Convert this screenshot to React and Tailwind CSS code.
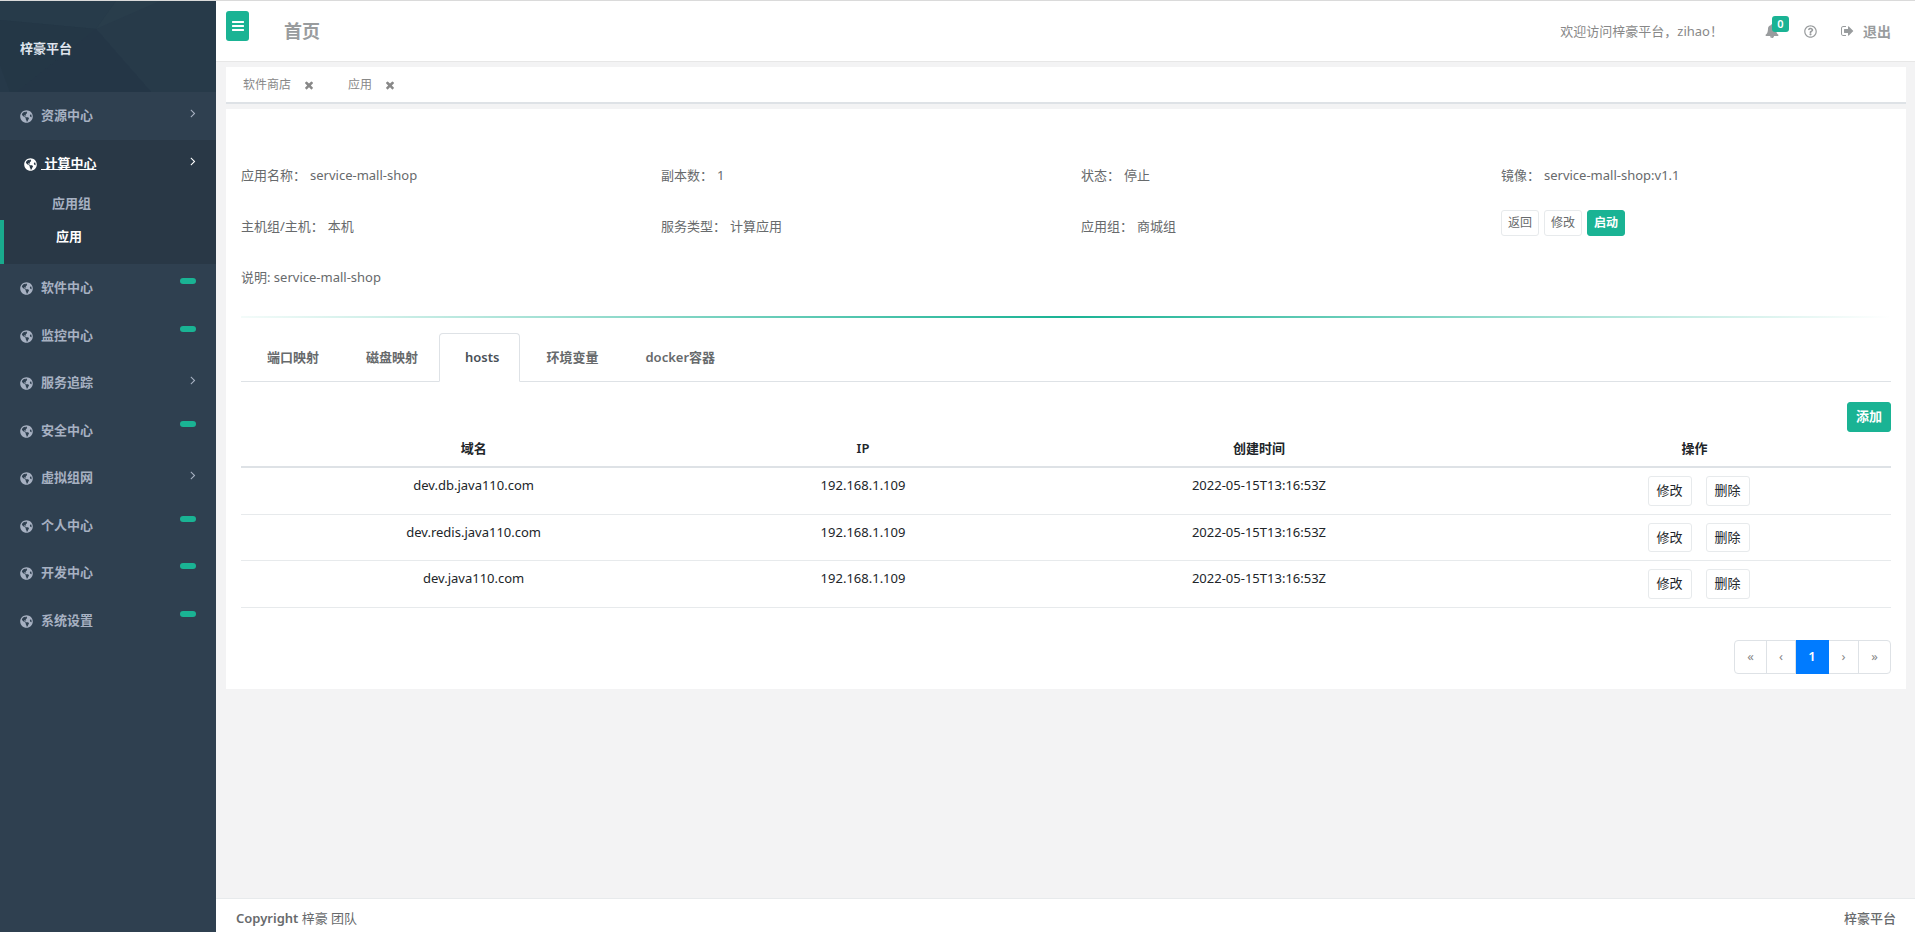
import React from "react";
import { FaGlobeAmericas, FaRegQuestionCircle } from "react-icons/fa";

const PATHS = {
  bars: "M1664 1344v128q0 26-19 45t-45 19h-1408q-26 0-45-19t-19-45v-128q0-26 19-45t45-19h1408q26 0 45 19t19 45zm0-512v128q0 26-19 45t-45 19h-1408q-26 0-45-19t-19-45v-128q0-26 19-45t45-19h1408q26 0 45 19t19 45zm0-512v128q0 26-19 45t-45 19h-1408q-26 0-45-19t-19-45v-128q0-26 19-45t45-19h1408q26 0 45 19t19 45z",
  times:
    "M1490 1322q0 40-28 68l-136 136q-28 28-68 28t-68-28l-294-294-294 294q-28 28-68 28t-68-28l-136-136q-28-28-28-68t28-68l294-294-294-294q-28-28-28-68t28-68l136-136q28-28 68-28t68 28l294 294 294-294q28-28 68-28t68 28l136 136q28 28 28 68t-28 68l-294 294 294 294q28 28 28 68z",
  angle:
    "M1171 960q0 13-10 23l-466 466q-10 10-23 10t-23-10l-50-50q-10-10-10-23t10-23l393-393-393-393q-10-10-10-23t10-23l50-50q10-10 23-10t23 10l466 466q10 10 10 23z",
  bell: "M912 1696q0-16-16-16-59 0-101.5-42.5t-42.5-101.5q0-16-16-16t-16 16q0 73 51.5 124.5t124.5 51.5q16 0 16-16zm816-288q0 52-38 90t-90 38h-448q0 106-75 181t-181 75-181-75-75-181h-448q-52 0-90-38t-38-90q50-42 91-88t85-119.5 74.5-158.5 50-206 19.5-260q0-152 117-282.5t307-158.5q-8-19-8-39 0-40 28-68t68-28 68 28 28 68q0 20-8 39 190 28 307 158.5t117 282.5q0 139 19.5 260t50 206 74.5 158.5 85 119.5 91 88z",
  signOut:
    "M640 1440q0 4 1 20t.5 26.5-3 23.5-10 19.5-20.5 6.5h-320q-119 0-203.5-84.5t-84.5-203.5v-704q0-119 84.5-203.5t203.5-84.5h320q13 0 22.5 9.5t9.5 22.5q0 4 1 20t.5 26.5-3 23.5-10 19.5-20.5 6.5h-320q-66 0-113 47t-47 113v704q0 66 47 113t113 47h312l11.5 1 11.5 3 8 5.5 7 9 2 13.5zm928-544q0 26-19 45l-544 544q-19 19-45 19t-45-19-19-45v-288h-448q-26 0-45-19t-19-45v-384q0-26 19-45t45-19h448v-288q0-26 19-45t45-19 45 19l544 544q19 19 19 45z",
};

function Icon({ name, className }) {
  return (
    <svg viewBox="0 0 1792 1792" fill="currentColor" aria-hidden="true" className={className}>
      <path d={PATHS[name]} />
    </svg>
  );
}

const MENU = [
  { label: "资源中心", arrow: true },
  { label: "计算中心", arrow: true, open: true },
  { label: "软件中心" },
  { label: "监控中心" },
  { label: "服务追踪", arrow: true },
  { label: "安全中心" },
  { label: "虚拟组网", arrow: true },
  { label: "个人中心" },
  { label: "开发中心" },
  { label: "系统设置" },
];

function MenuItem({ item }) {
  return (
    <li className={item.open ? "bg-[#293846]" : ""}>
      <a
        href="#"
        className={
          item.open
            ? "flex items-start py-[14px] pl-6 pr-5 font-semibold text-white"
            : "flex items-start py-[14px] pl-5 pr-5 font-semibold text-[#a7b1c2]"
        }
      >
        <FaGlobeAmericas className="mt-1 size-[13px] shrink-0" aria-hidden="true" />
        <span
          className={
            item.open ? "grow whitespace-pre pl-1 [&>span]:underline" : "grow pl-2"
          }
        >
          <span>{item.open ? " " + item.label : item.label}</span>
        </span>
        {item.arrow ? (
          <Icon name="angle" className="-mr-1 size-[14px]" />
        ) : (
          <span className="h-[6px] w-4 rounded-[3px] bg-[#1ab394]" />
        )}
      </a>
      {item.open && (
        <ul className="font-semibold">
          <li>
            <a href="#" className="flex h-[33px] items-center pl-[52px] text-[#a7b1c2]">
              应用组
            </a>
          </li>
          <li>
            <a
              href="#"
              className="flex h-11 items-start border-l-4 border-[#19aa8d] pl-[52px] pt-[7px] text-white"
            >
              应用
            </a>
          </li>
        </ul>
      )}
    </li>
  );
}

function Sidebar() {
  return (
    <aside className="w-[216px] shrink-0 bg-[#2f4050]">
      <div className="relative flex h-[91px] items-center overflow-hidden bg-[#263949] px-5 pt-1">
        <svg
          viewBox="0 0 216 91"
          preserveAspectRatio="none"
          className="absolute inset-0 size-full"
          aria-hidden="true"
        >
          <path d="M0 0H116L96 28L0 19Z" fill="#273b4a" />
          <path d="M116 0H216V12L96 28Z" fill="#293d4b" />
          <path d="M96 28L160 0H216V91H151Z" fill="#273a49" />
          <path d="M0 19L96 28L17 91H10L0 64Z" fill="#243746" />
          <path d="M96 28L151 91H17Z" fill="#243646" />
        </svg>
        <span className="relative font-semibold text-[#dfe4ed]">梓豪平台</span>
      </div>
      <nav aria-label="主菜单">
        <ul>
          {MENU.map((m) => (
            <MenuItem key={m.label} item={m} />
          ))}
        </ul>
      </nav>
    </aside>
  );
}

function Header() {
  return (
    <header className="flex h-[61px] items-center border-b border-[#e7e7e7] bg-white pl-[10px] pr-6 text-[#999c9e]">
      <button
        type="button"
        aria-label="切换菜单"
        className="mt-[10px] flex h-[30px] w-[23px] items-center justify-center self-start rounded-[3px] bg-[#1ab394] text-white"
      >
        <Icon name="bars" className="size-[14px]" />
      </button>
      <h1 className="grow pl-[35px] text-[18px] font-semibold">首页</h1>
      <span className="pt-px text-[#888888]">欢迎访问梓豪平台，zihao！</span>
      <a href="#" aria-label="消息" className="relative ml-[42px]">
        <Icon name="bell" className="size-[14px]" />
        <span className="absolute -top-2 left-[7px] flex h-4 w-[17px] items-center justify-center rounded-[3px] bg-[#1ab394] text-[11px] font-semibold text-white">
          0
        </span>
      </a>
      <a href="#" aria-label="帮助" className="ml-[25px]">
        <FaRegQuestionCircle className="size-[13px]" aria-hidden="true" />
      </a>
      <a href="#" className="ml-6 flex items-center gap-2 text-[14px] font-semibold">
        <Icon name="signOut" className="size-[14px]" />
        退出
      </a>
    </header>
  );
}

function PageTabs() {
  return (
    <div className="flex h-[37px] items-center gap-[33px] border-b-2 border-[#dee2e6] bg-white px-[17px] pt-px text-[12px] text-[#888888]">
      {["软件商店", "应用"].map((t) => (
        <div key={t} className="flex items-center gap-3">
          <a href="#">{t}</a>
          <button type="button" aria-label={"关闭" + t}>
            <Icon name="times" className="size-3" />
          </button>
        </div>
      ))}
    </div>
  );
}

function Field({ label, value }) {
  return (
    <div className="flex h-[51px] items-start gap-1 px-[15px]">
      <span>{label}</span>
      <span>{value}</span>
    </div>
  );
}

function SmallButton({ primary, children }) {
  return (
    <button
      type="button"
      className={
        primary
          ? "h-[26px] rounded-[3px] border border-[#1ab394] bg-[#1ab394] px-[6px] font-semibold text-white"
          : "h-[26px] rounded-[3px] border border-[#e7eaec] bg-white px-[6px]"
      }
    >
      {children}
    </button>
  );
}

const TABS = ["端口映射", "磁盘映射", "hosts", "环境变量", "docker容器"];

const ROWS = [
  { host: "dev.db.java110.com", ip: "192.168.1.109", time: "2022-05-15T13:16:53Z" },
  { host: "dev.redis.java110.com", ip: "192.168.1.109", time: "2022-05-15T13:16:53Z" },
  { host: "dev.java110.com", ip: "192.168.1.109", time: "2022-05-15T13:16:53Z" },
];

function Detail() {
  return (
    <section className="bg-white pt-[57px] pb-[15px]">
      <div className="grid grid-cols-4">
        <Field label="应用名称：" value="service-mall-shop" />
        <Field label="副本数：" value="1" />
        <Field label="状态：" value="停止" />
        <Field label="镜像：" value="service-mall-shop:v1.1" />
        <Field label="主机组/主机：" value="本机" />
        <Field label="服务类型：" value="计算应用" />
        <Field label="应用组：" value="商城组" />
        <div className="-mt-[7px] flex items-start gap-[5px] px-[15px] text-[12px]">
          <SmallButton>返回</SmallButton>
          <SmallButton>修改</SmallButton>
          <SmallButton primary>启动</SmallButton>
        </div>
      </div>
      <p className="px-[15px]">说明: service-mall-shop</p>
      <div className="px-[15px]">
        <div className="mt-7 h-[2px] bg-linear-to-r from-[#1ab394]/5 via-[#1ab394] to-[#1ab394]/0" />
        <div role="tablist" className="mt-[15px] flex border-b border-[#dee2e6] font-semibold">
          {TABS.map((t) => (
            <button
              key={t}
              type="button"
              role="tab"
              aria-selected={t === "hosts"}
              className={
                t === "hosts"
                  ? "-mb-px rounded-t-[4px] border border-b-white border-[#dee2e6] bg-white py-[14px] pl-[25px] pr-5 text-[#495057]"
                  : "-mb-px border border-transparent py-[14px] pl-[25px] pr-5"
              }
            >
              {t}
            </button>
          ))}
        </div>
        <div className="mt-5 flex justify-end">
          <button
            type="button"
            className="rounded-[3px] border border-[#1ab394] bg-[#1ab394] px-2 py-1 font-semibold text-white"
          >
            添加
          </button>
        </div>
        <table className="w-full table-fixed border-collapse text-center text-[#212529]">
          <thead>
            <tr className="border-b-2 border-[#dee2e6]">
              <th className="w-[28.2%] px-2 pt-[7px] pb-2 font-semibold">域名</th>
              <th className="w-[19%] px-2 pt-[7px] pb-2 font-semibold">IP</th>
              <th className="w-[29%] px-2 pt-[7px] pb-2 font-semibold">创建时间</th>
              <th className="px-2 pt-[7px] pb-2 font-semibold">操作</th>
            </tr>
          </thead>
          <tbody>
            {ROWS.map((r) => (
              <tr key={r.host} className="border-b border-[#e7eaec] align-top">
                <td className="p-2">{r.host}</td>
                <td className="p-2">{r.ip}</td>
                <td className="p-2">{r.time}</td>
                <td className="p-2">
                  <div className="flex justify-center gap-[14px] pl-2">
                    <button type="button" className="rounded-[3px] border border-[#e7eaec] px-2 py-1">
                      修改
                    </button>
                    <button type="button" className="rounded-[3px] border border-[#e7eaec] px-2 py-1">
                      删除
                    </button>
                  </div>
                </td>
              </tr>
            ))}
          </tbody>
        </table>
        <nav aria-label="分页" className="mt-8 flex justify-end">
          <div className="flex h-[34px] divide-x divide-[#dee2e6] rounded-[4px] border border-[#dee2e6] text-[#888888]">
            <button type="button" className="w-8">«</button>
            <button type="button" className="w-[29px]">‹</button>
            <button type="button" className="-my-px w-[33px] border-[#007bff] bg-[#007bff] font-semibold text-white">1</button>
            <button type="button" className="w-[30px]">›</button>
            <button type="button" className="w-[31px]">»</button>
          </div>
        </nav>
      </div>
    </section>
  );
}

export default function App() {
  return (
    <div className="flex min-h-screen border-t border-[#dadada] bg-[#f3f3f4] font-['Noto_Sans','Noto_Sans_CJK_SC',sans-serif] text-[13px] leading-normal text-[#676a6c]">
      <Sidebar />
      <div className="flex min-w-0 grow flex-col">
        <Header />
        <main className="flex grow flex-col gap-[5px] pt-[5px] pl-[10px] pr-[9px]">
          <PageTabs />
          <Detail />
        </main>
        <footer className="flex h-[34px] items-center justify-between border-t border-[#e7eaec] bg-white pl-5 pr-[19px] pt-[6px]">
          <p>
            <strong className="font-semibold">Copyright</strong> 梓豪 团队
          </p>
          <p className="font-medium">梓豪平台</p>
        </footer>
      </div>
    </div>
  );
}
